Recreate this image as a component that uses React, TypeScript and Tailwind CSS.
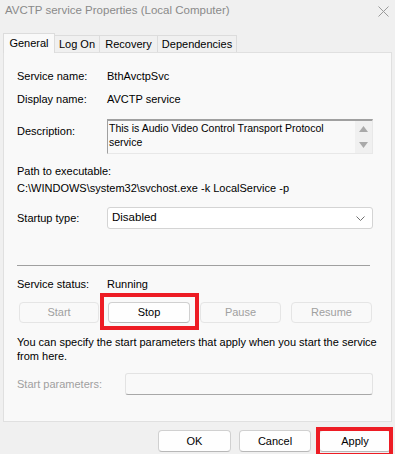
import React from "react";

const FONT = { fontFamily: '"Liberation Sans", Arial, sans-serif' };

function Tab({ label, active, w }: { label: string; active?: boolean; w: string }) {
  return (
    <div
      className={
        active
          ? `relative z-10 -mb-px h-[20px] ${w} flex items-center justify-center bg-[#f9f9f9] border border-b-0 border-[#dcdcdc] text-[11px] text-black`
          : `h-[17px] ${w} flex items-center justify-center bg-[#f0f0f0] border border-b-0 border-l-0 border-[#dcdcdc] text-[11px] text-black`
      }
    >
      {label}
    </div>
  );
}

function Btn({ label, disabled, className = "" }: { label: string; disabled?: boolean; className?: string }) {
  return (
    <div
      className={`h-[21px] flex items-center justify-center rounded-[4px] border text-[11px] ${
        disabled
          ? "bg-[#f9f9f9] border-[#e5e5e5] text-[#a0a0a0]"
          : "bg-[#fefefe] border-[#d0d0d0] border-b-[#b8b8b8] text-black"
      } ${className}`}
    >
      {label}
    </div>
  );
}

export default function App() {
  return (
    <div className="relative w-[395px] h-[454px] overflow-hidden bg-[#f0f0f0] text-black" style={FONT}>
      {/* title bar */}
      <div className="h-[22px] flex items-center justify-between pl-[5px] pr-[5px]">
        <span className="text-[11.5px] text-[#8a8a8a]">AVCTP service Properties (Local Computer)</span>
        <svg width="11" height="11" viewBox="0 0 11 11" className="mr-[1px]">
          <path d="M0.5 0.5 L10.5 10.5 M10.5 0.5 L0.5 10.5" stroke="#9a9a9a" strokeWidth="1" />
        </svg>
      </div>

      {/* tabs */}
      <div className="h-[30px] flex items-end pl-[3px]">
        <Tab label="General" active w="w-[52px]" />
        <Tab label="Log On" w="w-[45px]" />
        <Tab label="Recovery" w="w-[58px]" />
        <Tab label="Dependencies" w="w-[79px]" />
      </div>

      {/* page */}
      <div className="ml-[3px] w-[389px] h-[370px] border border-[#e0e0e0] bg-[#f9f9f9] pl-[13px] text-[11px]">
        <div className="flex h-[16px] items-center mt-[15px]">
          <span className="w-[90px]">Service name:</span>
          <span>BthAvctpSvc</span>
        </div>
        <div className="flex h-[16px] items-center mt-[7px]">
          <span className="w-[90px]">Display name:</span>
          <span>AVCTP service</span>
        </div>
        <div className="flex mt-[12px]">
          <span className="w-[90px] pt-[4px]">Description:</span>
          <div className="w-[266px] h-[35px] flex border-t-2 border-l border-[#a0a0a0] border-r border-r-[#e8e8e8] border-b border-b-[#e8e8e8] bg-[#f9f9f9]">
            <div className="flex-1 text-[10.5px] leading-[14px] pl-[1px]">
              This is Audio Video Control Transport Protocol service
            </div>
            <div className="w-[17px] bg-[#f0f0f0] flex flex-col items-center justify-between py-[5px]">
              <svg width="9" height="6" viewBox="0 0 9 6"><path d="M4.5 0 L9 6 L0 6 Z" fill="#a9a9a9" /></svg>
              <svg width="9" height="6" viewBox="0 0 9 6"><path d="M0 0 L9 0 L4.5 6 Z" fill="#a9a9a9" /></svg>
            </div>
          </div>
        </div>
        <div className="h-[16px] flex items-center mt-[9px]">Path to executable:</div>
        <div className="h-[16px] flex items-center mt-[1px]">C:\WINDOWS\system32\svchost.exe -k LocalService -p</div>
        <div className="flex items-center mt-[11px]">
          <span className="w-[90px]">Startup type:</span>
          <div className="w-[266px] h-[22px] flex items-center justify-between bg-white border border-[#d4d4d4] rounded-[3px] pl-[4px] pr-[7px]">
            <span className="text-[11.5px]">Disabled</span>
            <svg width="9" height="5" viewBox="0 0 9 5"><path d="M0.5 0.5 L4.5 4.5 L8.5 0.5" stroke="#707070" fill="none" strokeWidth="1" /></svg>
          </div>
        </div>
        <div className="w-[353px] h-px bg-[#a0a0a0] mt-[36px]" />
        <div className="flex h-[16px] items-center mt-[10px]">
          <span className="w-[90px]">Service status:</span>
          <span>Running</span>
        </div>
        <div className="flex mt-[10px] ml-[2px]">
          <Btn label="Start" disabled className="w-[80px]" />
          <Btn label="Stop" className="w-[82px] ml-[9px]" />
          <Btn label="Pause" disabled className="w-[81px] ml-[10px]" />
          <Btn label="Resume" disabled className="w-[81px] ml-[10px]" />
        </div>
        <p className="mt-[12px] leading-[14px] w-[360px]">
          You can specify the start parameters that apply when you start the service from here.
        </p>
        <div className="flex items-center mt-[10px]">
          <span className="w-[108px] text-[#a0a0a0]">Start parameters:</span>
          <div className="w-[248px] h-[22px] bg-[#f9f9f9] border border-[#e3e3e3] border-b-[#a8a8a8] rounded-[3px]" />
        </div>
      </div>

      {/* dialog buttons */}
      <div className="flex mt-[8px] pl-[158px]">
        <Btn label="OK" className="w-[73px] h-[22px]" />
        <Btn label="Cancel" className="w-[72px] h-[22px] ml-[8px]" />
        <Btn label="Apply" className="w-[72px] h-[22px] ml-[8px]" />
      </div>

      {/* red highlight boxes */}
      <div className="absolute left-[100px] top-[293px] w-[99px] h-[37px] border-4 border-[#ed1c24]" />
      <div className="absolute left-[316px] top-[427px] w-[77px] h-[30px] border-4 border-[#ed1c24]" />
    </div>
  );
}
